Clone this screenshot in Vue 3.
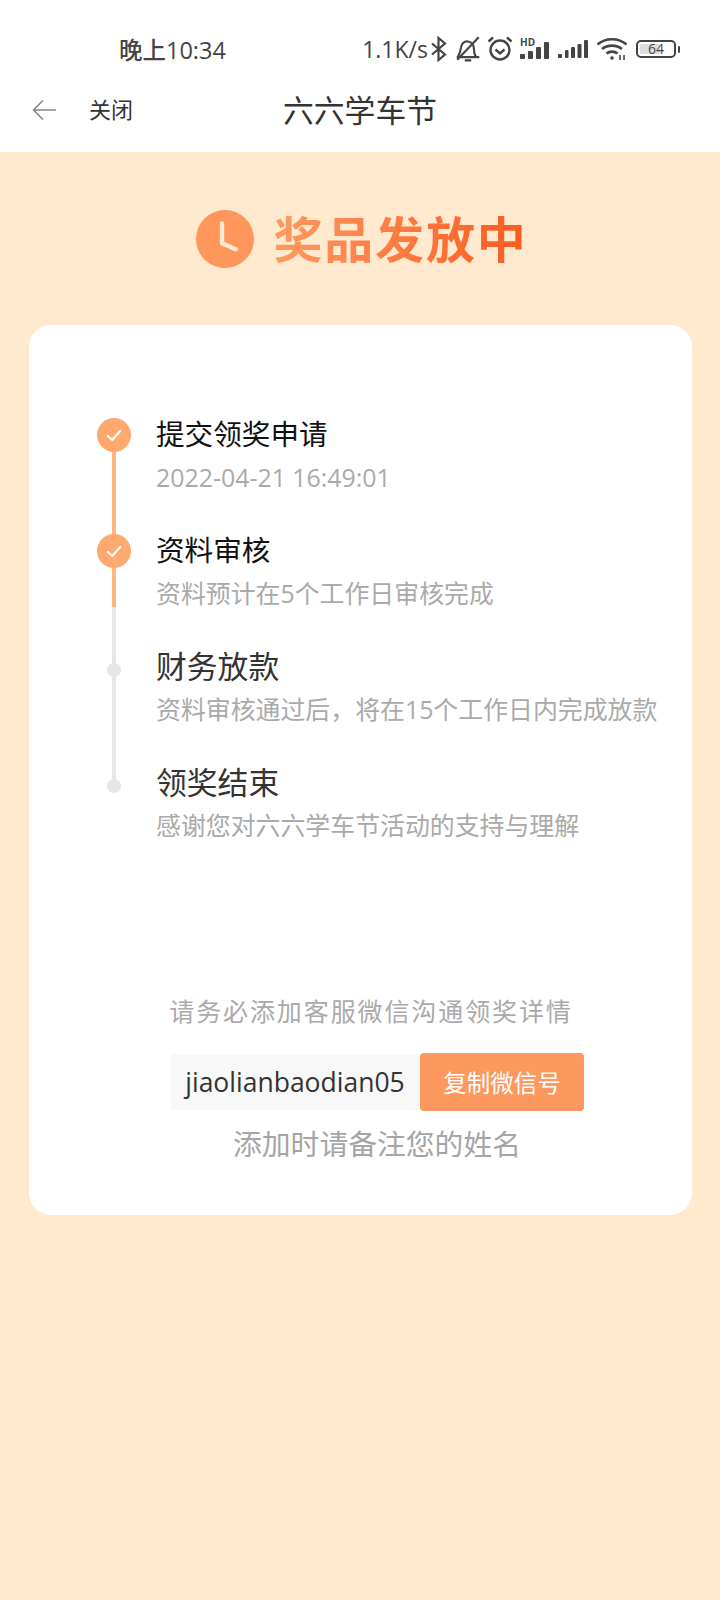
<script setup>
const steps = [
  { title: '提交领奖申请', desc: '2022-04-21 16:49:01', done: true, line: 'full' },
  { title: '资料审核', desc: '资料预计在5个工作日审核完成', done: true, line: 'half' },
  { title: '财务放款', desc: '资料审核通过后，将在15个工作日内完成放款', done: false, line: 'grey' },
  { title: '领奖结束', desc: '感谢您对六六学车节活动的支持与理解', done: false, line: 'none' }
]
</script>

<template>
  <div class="page">
    <div class="status">
      <span class="time">晚上10:34</span>
      <div class="status-right">
        <span class="speed">1.1K/s</span>
        <svg width="18" height="26" viewBox="0 0 18 26" fill="none" stroke="#444" stroke-width="2.2">
          <path d="M2 7.5 15 18.5 8.5 24V2L15 7.5 2 18.5" />
        </svg>
        <svg class="ml6" width="28" height="28" viewBox="0 0 26 26" fill="none" stroke="#444" stroke-width="2">
          <path d="M2.500 20.500h21M20.500 20.500c-1.500-2-2-4.500-2-7.500 0-3.500-2-6.500-5.500-7-3.500-.5-6 2-6.500 5.500L5.500 16 3.500 20.500M10 23.500h6M3 23 23 2" />
        </svg>
        <svg class="ml4" width="28" height="28" viewBox="0 0 28 28" fill="none" stroke="#444" stroke-width="2.4">
          <circle cx="14" cy="15" r="9.500" />
          <path d="M9.500 14.500l4.500 4 4.500-4M2.500 6.500 7 2.500M25.500 6.500 21 2.500" />
        </svg>
        <div class="signal ml6">
          <span class="hd-text">HD</span>
          <svg width="30" height="17" viewBox="0 0 30 17" fill="#444">
            <rect x="0" y="12" width="5" height="5" rx="1" />
            <rect x="8" y="9" width="5" height="8" rx="1" />
            <rect x="16" y="5" width="5" height="12" rx="1" />
            <rect x="24" y="0" width="5" height="17" rx="1" />
          </svg>
        </div>
        <svg class="ml8" width="30" height="18" viewBox="0 0 30 18" fill="#444">
          <rect x="0" y="14" width="4" height="4" rx="1" />
          <rect x="7" y="10" width="3.500" height="8" rx="1" />
          <rect x="13" y="7" width="4" height="11" rx="1" />
          <rect x="19.500" y="4" width="4" height="14" rx="1" />
          <rect x="26" y="0" width="4" height="18" rx="1" />
        </svg>
        <svg class="ml8" width="32" height="24" viewBox="0 0 32 24" fill="none" stroke="#444" stroke-width="2.600">
          <path d="M1.500 7.500c8-7 21-7 29 0M6 12c5.500-4.500 14.500-4.500 20 0M10.500 16.500c3-2.500 8-2.500 11 0" />
          <circle cx="16" cy="21" r="1.800" fill="#444" stroke="none" />
          <path d="M24 18v5M28 18v5" stroke-width="1.600" />
        </svg>
        <div class="battery">
          <div class="battery-box">
            <div class="battery-fill" style="width: 64%"></div>
            <span class="battery-num">64</span>
          </div>
          <div class="battery-cap"></div>
        </div>
      </div>
    </div>

    <div class="nav">
      <svg class="back" width="25" height="22" viewBox="0 0 25 22" fill="none" stroke="#888" stroke-width="1.600">
        <path d="M24 11H2M11 1.500 1.500 11 11 20.500" />
      </svg>
      <span class="close">关闭</span>
      <span class="nav-title">六六学车节</span>
    </div>

    <div class="content">
      <div class="banner">
        <svg width="58" height="58" viewBox="0 0 58 58">
          <circle cx="29" cy="29" r="29" fill="#ff965c" />
          <path d="M26 13.500V33.300L39.700 39.300" fill="none" stroke="#ffe9cf" stroke-width="4.400" stroke-linecap="round" stroke-linejoin="round" />
        </svg>
        <span class="banner-text">奖品发放中</span>
      </div>

      <div class="card">
        <div class="steps">
          <div v-for="s in steps" :key="s.title" class="step">
            <div class="rail">
              <div v-if="s.done" class="dot-done">
                <svg width="16" height="13" viewBox="0 0 18 14" fill="none" stroke="#fff" stroke-width="2.400" stroke-linecap="round" stroke-linejoin="round">
                  <path d="M2 7.500 7 12 16 2" />
                </svg>
              </div>
              <div v-else class="dot-todo"></div>
              <div v-if="s.line !== 'none'" class="line" :class="'line-' + s.line"></div>
            </div>
            <div class="step-body">
              <div class="step-title" :class="{ todo: !s.done }">{{ s.title }}</div>
              <div class="step-desc">{{ s.desc }}</div>
            </div>
          </div>
        </div>

        <div class="contact">
          <div class="hint">请务必添加客服微信沟通领奖详情</div>
          <div class="copy-row">
            <span class="wechat">jiaolianbaodian05</span>
            <button class="copy-btn">复制微信号</button>
          </div>
          <div class="note">添加时请备注您的姓名</div>
        </div>
      </div>
    </div>
  </div>
</template>

<style>
html,
body {
  margin: 0;
  background: #ffe9cf;
}
</style>

<style scoped>
.page {
  width: 720px;
  height: 1600px;
  display: flex;
  flex-direction: column;
  background: #ffe9cf;
  font-family: "Open Sans", "Noto Sans CJK SC", sans-serif;
}

.status {
  height: 64px;
  flex: none;
  background: #fff;
  display: flex;
  align-items: center;
  padding: 34px 40px 0 119px;
  box-sizing: border-box;
  justify-content: space-between;
  color: #444;
}

.time {
  font-size: 23.500px;
  font-weight: 500;
}

.status-right {
  display: flex;
  align-items: center;
}

.speed {
  font-size: 23px;
  font-weight: 500;
  margin-right: 2px;
}

.ml4 {
  margin-left: 4px;
}

.ml6 {
  margin-left: 6px;
}

.ml8 {
  margin-left: 8px;
}

.signal {
  position: relative;
  width: 30px;
  height: 26px;
  margin-bottom: 6px;
  display: flex;
  align-items: flex-end;
}

.hd-text {
  position: absolute;
  left: 0;
  top: 4px;
  font-size: 10px;
  font-weight: 700;
  line-height: 10px;
  color: #444;
}

.battery {
  display: flex;
  align-items: center;
  margin-left: 8px;
}

.battery-box {
  position: relative;
  width: 40px;
  height: 18px;
  border: 2px solid #444;
  border-radius: 5px;
  box-sizing: border-box;
  padding: 2px;
}

.battery-fill {
  height: 100%;
  background: #ddd;
  border-radius: 1px;
}

.battery-num {
  position: absolute;
  inset: 0;
  text-align: center;
  font-size: 14px;
  line-height: 14px;
  color: #444;
}

.battery-cap {
  width: 2px;
  height: 7px;
  margin-left: 2px;
  background: #444;
  border-radius: 1px;
}

.nav {
  position: relative;
  height: 88px;
  flex: none;
  background: #fff;
  display: flex;
  align-items: center;
  padding-left: 32px;
}

.back {
  margin-top: 4px;
  margin-right: 32px;
}

.close {
  font-size: 22px;
  color: #333;
}

.nav-title {
  position: absolute;
  left: 0;
  right: 0;
  text-align: center;
  font-size: 30.800px;
  color: #333;
}

.content {
  flex: 1;
  padding: 0 28px 0 29px;
}

.banner {
  display: flex;
  align-items: center;
  justify-content: center;
  gap: 19px;
  height: 58px;
  margin: 58px 0 57px;
  padding-left: 3px;
}

.banner-text {
  font-size: 49px;
  font-weight: 700;
  line-height: 56px;
  letter-spacing: 1.800px;
  background: linear-gradient(90deg, #ff9a60, #fb5a20);
  -webkit-background-clip: text;
  background-clip: text;
  color: transparent;
}

.card {
  background: #fff;
  border-radius: 22px;
  height: 890px;
  box-sizing: border-box;
  padding: 90px 0 0 67px;
}

.step {
  display: flex;
  height: 116px;
}

.rail {
  position: relative;
  width: 36px;
  height: 116px;
  flex: none;
  display: flex;
  justify-content: center;
  margin-right: 24px;
}

.dot-done {
  position: relative;
  z-index: 1;
  width: 34px;
  height: 34px;
  margin-top: 3px;
  border-radius: 50%;
  background: #ffa96f;
  display: flex;
  align-items: center;
  justify-content: center;
}

.dot-todo {
  position: relative;
  z-index: 1;
  width: 14px;
  height: 14px;
  margin-top: 16px;
  border-radius: 50%;
  background: #e6e6e6;
}

.line {
  position: absolute;
  left: 16px;
  top: 18px;
  width: 4px;
  height: 116px;
  background: #e6e6e6;
}

.line-full {
  background: #ffb582;
}

.line-half {
  background: linear-gradient(180deg, #ffb582 0 58px, #e6e6e6 58px);
}

.step-title {
  font-size: 28.600px;
  line-height: 38px;
  color: #111;
}

.step-title.todo {
  font-size: 30.800px;
  color: #333;
}

.step-desc {
  margin-top: 7px;
  font-size: 24.900px;
  line-height: 34px;
  color: #aaa;
  white-space: nowrap;
}

.contact {
  margin-top: 114px;
  margin-left: -67px;
  padding-left: 33px;
  display: flex;
  flex-direction: column;
  align-items: center;
}

.hint {
  margin-left: -12px;
  font-size: 25px;
  line-height: 36px;
  letter-spacing: 1.900px;
  color: #aaa;
}

.copy-row {
  display: flex;
  align-items: center;
  margin-top: 24px;
  height: 58px;
}

.wechat {
  width: 250px;
  height: 56px;
  background: #f8f8f8;
  border-radius: 4px 0 0 4px;
  text-align: center;
  font-size: 26.500px;
  line-height: 56px;
  color: #333;
}

.copy-btn {
  width: 164px;
  height: 58px;
  border: none;
  border-radius: 4px;
  background: #fd985e;
  color: #fff;
  font-family: inherit;
  font-size: 23.500px;
  padding: 0;
}

.note {
  margin-top: 13px;
  font-size: 28.800px;
  line-height: 40px;
  color: #a5a5a5;
}
</style>
